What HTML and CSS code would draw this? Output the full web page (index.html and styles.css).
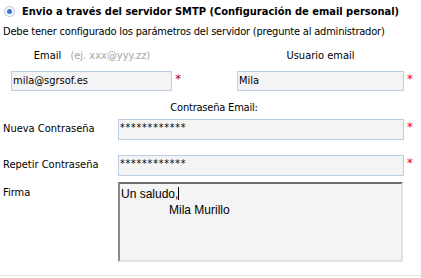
FILE: index.html
```html
<!DOCTYPE html>
<html lang="es">
<head>
  <meta charset="UTF-8">
  <title>Configuración de email</title>
  <link rel="stylesheet" href="styles.css">
</head>
<body>

  <div class="panel">
    <div class="option">
      <span class="radio"><span class="dot"></span></span>
      <span class="option-title">Envio a través del servidor SMTP (Configuración de email personal)</span>
    </div>
    <p class="hint">Debe tener configurado los parámetros del servidor (pregunte al administrador)</p>

    <div class="account">
      <div class="field">
        <div class="field-label">Email <span class="example">(ej. xxx@yyy.zz)</span></div>
        <div class="field-input">
          <div class="input email-input">mila@sgrsof.es</div>
          <span class="req dark">*</span>
        </div>
      </div>
      <div class="field">
        <div class="field-label">Usuario email</div>
        <div class="field-input">
          <div class="input user-input">Mila</div>
          <span class="req">*</span>
        </div>
      </div>
    </div>

    <div class="section-title">Contraseña Email:</div>

    <div class="row">
      <label class="row-label">Nueva Contraseña</label>
      <div class="input wide pass">************</div>
      <span class="req">*</span>
    </div>
    <div class="row">
      <label class="row-label">Repetir Contraseña</label>
      <div class="input wide pass">************</div>
      <span class="req">*</span>
    </div>
    <div class="row signature">
      <label class="row-label">Firma</label>
      <div class="textarea">
        <div>Un saludo,<span class="caret"></span></div>
        <div class="indent">Mila Murillo</div>
      </div>
    </div>
  </div>

  <div class="divider"></div>

</body>
</html>
```

FILE: styles.css
```css
body {
  margin: 0;
  background-color: #fff;
  font-family: 'DejaVu Sans Condensed', 'DejaVu Sans', sans-serif;
  font-size: 11px;
  color: #000;
}

.panel {
  width: 421px;
  height: 275px;
  box-sizing: border-box;
  padding-top: 4px;
}

.option {
  display: flex;
  align-items: center;
  height: 14px;
  padding-left: 4px;
  white-space: nowrap;
}

.radio {
  width: 9px;
  height: 9px;
  border: 1px solid #b9c6d8;
  border-radius: 50%;
  display: flex;
  justify-content: center;
  align-items: center;
  margin-right: 7px;
  background: #f7f9fc;
}

.dot {
  width: 5px;
  height: 5px;
  border-radius: 50%;
  background: #3c78d8;
}

.option-title {
  font-weight: bold;
  font-size: 11px;
}

.hint {
  margin: 7px 0 0 3px;
  line-height: 14px;
  letter-spacing: -0.2px;
}

.account {
  display: flex;
  margin-top: 10px;
}

.field {
  display: flex;
  flex-direction: column;
}

.field:first-child {
  padding-left: 11px;
  width: 170px;
}

.field:last-child {
  padding-left: 56px;
}

.field-label {
  text-align: center;
  height: 14px;
  margin-bottom: 8px;
  width: 162px;
}

.field:last-child .field-label {
  width: 167px;
}

.example {
  color: #a7a7a7;
  margin-left: 6px;
}

.field-input {
  display: flex;
}

.input {
  height: 18px;
  border: 1px solid #bccde4;
  background-color: #f4f4f4;
  line-height: 18px;
  padding-left: 1px;
  box-sizing: content-box;
}

.email-input {
  width: 159px;
}

.user-input {
  width: 164px;
}

.req {
  color: #ff0000;
  font-size: 13px;
  line-height: 16px;
  margin-left: 3px;
}

.req.dark {
  color: #b40000;
}

.section-title {
  text-align: center;
  width: 428px;
  margin-top: 10px;
  height: 18px;
  letter-spacing: -0.2px;
}

.row {
  display: flex;
}

.row + .row {
  margin-top: 15px;
}

.row-label {
  width: 118px;
  padding-left: 3px;
  box-sizing: border-box;
  line-height: 19px;
}

.row .wide {
  width: 283px;
  height: 19px;
  line-height: 14px;
}

.pass {
  font-size: 10.5px;
  letter-spacing: 0.8px;
}

.signature {
  margin-top: 6px !important;
}

.signature .row-label {
  line-height: 14px;
  padding-top: 4px;
}

.textarea {
  width: 280px;
  height: 74px;
  border-top: 2px solid #6e6e6e;
  border-left: 2px solid #8a8a8a;
  border-right: 2px solid #e2e2e2;
  border-bottom: 2px solid #e2e2e2;
  background-color: #f4f4f4;
  font-family: 'Liberation Sans', sans-serif;
  font-size: 12px;
  line-height: 16px;
  padding-left: 1px;
  padding-top: 2px;
  box-sizing: content-box;
}

.indent {
  padding-left: 48px;
}

.caret {
  display: inline-block;
  width: 1px;
  height: 13px;
  background: #000;
  vertical-align: -2px;
}

.divider {
  height: 1px;
  background-color: #e3e3e3;
}
```
